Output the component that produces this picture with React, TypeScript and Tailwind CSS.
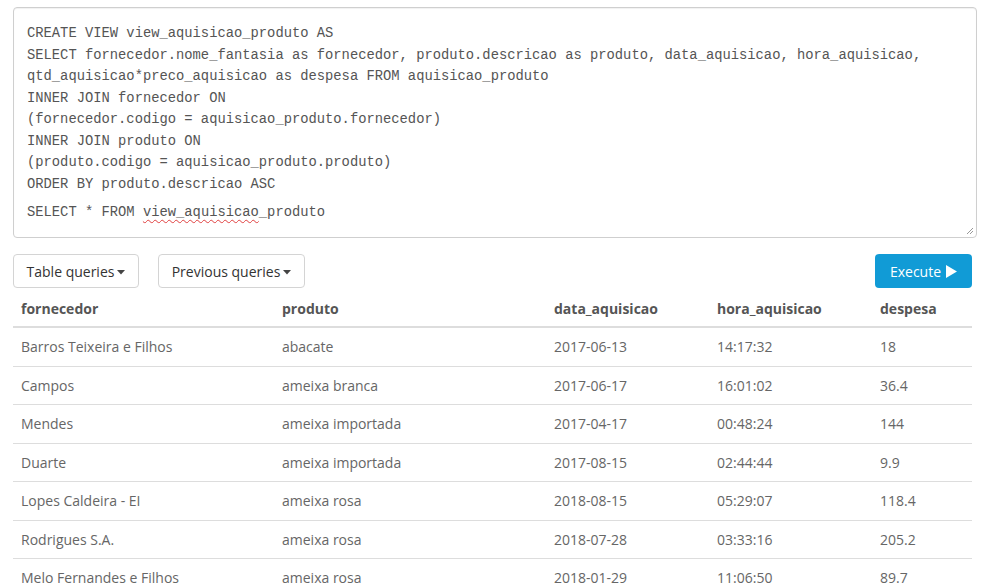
import React from "react";

const rows = [
  ["Barros Teixeira e Filhos", "abacate", "2017-06-13", "14:17:32", "18"],
  ["Campos", "ameixa branca", "2017-06-17", "16:01:02", "36.4"],
  ["Mendes", "ameixa importada", "2017-04-17", "00:48:24", "144"],
  ["Duarte", "ameixa importada", "2017-08-15", "02:44:44", "9.9"],
  ["Lopes Caldeira - EI", "ameixa rosa", "2018-08-15", "05:29:07", "118.4"],
  ["Rodrigues S.A.", "ameixa rosa", "2018-07-28", "03:33:16", "205.2"],
  ["Melo Fernandes e Filhos", "ameixa rosa", "2018-01-29", "11:06:50", "89.7"],
];

const codeLines = [
  "CREATE VIEW view_aquisicao_produto AS",
  "SELECT fornecedor.nome_fantasia as fornecedor, produto.descricao as produto, data_aquisicao, hora_aquisicao,",
  "qtd_aquisicao*preco_aquisicao as despesa FROM aquisicao_produto",
  "INNER JOIN fornecedor ON",
  "(fornecedor.codigo = aquisicao_produto.fornecedor)",
  "INNER JOIN produto ON",
  "(produto.codigo = aquisicao_produto.produto)",
  "ORDER BY produto.descricao ASC",
];

const colW = ["w-[261px]", "w-[272px]", "w-[163px]", "w-[163px]", "w-[100px]"];
const headers = ["fornecedor", "produto", "data_aquisicao", "hora_aquisicao", "despesa"];

function Caret() {
  return (
    <svg width="8" height="5" viewBox="0 0 8 5" className="ml-[3px] mt-[2px]">
      <path d="M0 0 L8 0 L4 4.5 Z" fill="#444" />
    </svg>
  );
}

export default function App() {
  return (
    <div className="w-[995px] h-[584px] overflow-hidden bg-white" style={{ fontFamily: "'Open Sans', 'Noto Sans', sans-serif" }}>
      <div className="pl-[13px] pr-[18px] pt-[7px]">
        <div className="relative h-[231px] rounded-[4px] border border-[#cfcfcf] bg-white pl-[13px] pt-[15px] text-[#555] shadow-[inset_0_1px_1px_rgba(0,0,0,0.06)]"
          style={{ fontFamily: "'Liberation Mono', 'DejaVu Sans Mono', monospace" }}>
          <div className="text-[13.8px] leading-[21.57px] tracking-[0px]">
            {codeLines.map((l, i) => (
              <div key={i} className="whitespace-pre">{l}</div>
            ))}
            <div className="mt-[6px] whitespace-pre">
              SELECT * FROM{" "}
              <span className="underline decoration-wavy decoration-[#e04040] decoration-[1px] underline-offset-[3px]">view_aquisicao</span>
              _produto
            </div>
          </div>
          <svg className="absolute right-[2px] bottom-[2px]" width="9" height="9" viewBox="0 0 9 9">
            <path d="M8 2 L2 8 M8 5 L5 8" stroke="#999" strokeWidth="1" />
          </svg>
        </div>
      </div>
      <div className="mx-[13px] w-[959px]">
        <div className="mt-[16px] flex h-[34px] items-center">
          <div className="flex h-[34px] w-[126px] items-center justify-center rounded-[4px] border border-[#d4d4d4] text-[14px] text-[#333]">
            Table queries<Caret />
          </div>
          <div className="ml-[19px] flex h-[34px] w-[147px] items-center justify-center rounded-[4px] border border-[#d4d4d4] text-[14px] text-[#333]">
            Previous queries<Caret />
          </div>
          <div className="ml-auto flex h-[34px] w-[97px] items-center justify-center rounded-[4px] bg-[#119bd6] text-[14px] text-white">
            Execute
            <svg width="11" height="13" viewBox="0 0 11 13" className="ml-[5px]">
              <path d="M0 0 L11 6.5 L0 13 Z" fill="#fff" />
            </svg>
          </div>
        </div>
        <div className="flex h-[40px] items-center border-b-2 border-[#ddd] pt-[3px] text-[14px] font-bold text-[#555]">
          {headers.map((h, i) => (
            <div key={i} className={`${colW[i]} px-[8px]`}>{h}</div>
          ))}
        </div>
        {rows.map((r, ri) => (
          <div key={ri} className="flex h-[38.5px] items-center border-b border-[#ddd] text-[14px] text-[#666]">
            {r.map((c, ci) => (
              <div key={ci} className={`${colW[ci]} px-[8px]`}>{c}</div>
            ))}
          </div>
        ))}
      </div>
    </div>
  );
}
